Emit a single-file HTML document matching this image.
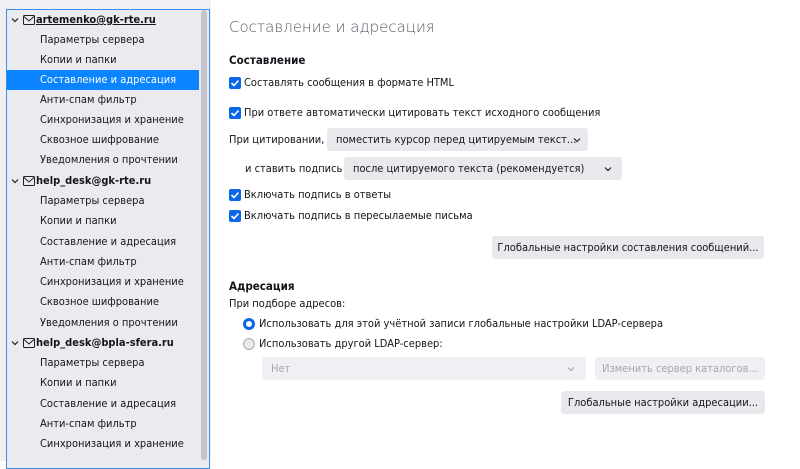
<!DOCTYPE html>
<html><head><meta charset="utf-8"><style>
*{margin:0;padding:0;box-sizing:border-box}
body{width:800px;height:461px;overflow:hidden;background:#fff;font-family:"DejaVu Sans","Liberation Sans",sans-serif;font-stretch:condensed;font-size:11px;color:#15141a;position:relative;white-space:nowrap}
.side{position:absolute;left:0;top:0;width:211px;height:461px;background:#f0f0f4}
.panel{position:absolute;left:6px;top:9px;width:204px;height:460px;border:1px solid #3a8ef0;background:#ebebef}
.sb{position:absolute;left:201px;top:10px;width:6px;height:450px;background:#c5c5c9;border-radius:3px}
.row{position:absolute;left:7px;width:192px;height:20px;line-height:20px}
.it{padding-left:33px}
.sel{background:#0a84ff;color:#fff}
.acc{font-weight:bold;padding-left:29px}
.acc .ch{position:absolute;left:4px;top:7px}
.acc .env{position:absolute;left:16px;top:5px}
.t{position:absolute}
.cb{position:absolute;width:12px;height:12px;background:#0a68e8;border-radius:2px}
.cb svg{position:absolute;left:1px;top:1px}
.sel2{position:absolute;height:23px;background:#e9e9ed;border-radius:3px;line-height:23px;padding-left:9px}
.btn{position:absolute;height:23px;background:#e9e9ed;border-radius:3px;line-height:23px;text-align:center}
.arr{position:absolute;top:9px}
</style></head><body>
<div class="side"><div class="panel"></div>
<div class="row acc" style="top:10px"><svg class="ch" width="8" height="6" viewBox="0 0 8 6"><path d="M1 1.5l3 3 3-3" fill="none" stroke="#222" stroke-width="1.2"/></svg><svg class="env" width="12" height="10" viewBox="0 0 12 10"><rect x=".5" y=".5" width="11" height="9" rx="1" fill="none" stroke="#222"/><path d="M1 1.5L6 6l5-4.5" fill="none" stroke="#222"/></svg><span style="text-decoration:underline">artemenko@gk-rte.ru</span></div>
<div class="row it" style="top:30px">Параметры сервера</div>
<div class="row it" style="top:50px">Копии и папки</div>
<div class="row it sel" style="top:70px">Составление и адресация</div>
<div class="row it" style="top:90px">Анти-спам фильтр</div>
<div class="row it" style="top:110px">Синхронизация и хранение</div>
<div class="row it" style="top:130px">Сквозное шифрование</div>
<div class="row it" style="top:150px">Уведомления о прочтении</div>
<div class="row acc" style="top:171px"><svg class="ch" width="8" height="6" viewBox="0 0 8 6"><path d="M1 1.5l3 3 3-3" fill="none" stroke="#222" stroke-width="1.2"/></svg><svg class="env" width="12" height="10" viewBox="0 0 12 10"><rect x=".5" y=".5" width="11" height="9" rx="1" fill="none" stroke="#222"/><path d="M1 1.5L6 6l5-4.5" fill="none" stroke="#222"/></svg>help_desk@gk-rte.ru</div>
<div class="row it" style="top:191px">Параметры сервера</div>
<div class="row it" style="top:211px">Копии и папки</div>
<div class="row it" style="top:232px">Составление и адресация</div>
<div class="row it" style="top:252px">Анти-спам фильтр</div>
<div class="row it" style="top:272px">Синхронизация и хранение</div>
<div class="row it" style="top:292px">Сквозное шифрование</div>
<div class="row it" style="top:313px">Уведомления о прочтении</div>
<div class="row acc" style="top:333px"><svg class="ch" width="8" height="6" viewBox="0 0 8 6"><path d="M1 1.5l3 3 3-3" fill="none" stroke="#222" stroke-width="1.2"/></svg><svg class="env" width="12" height="10" viewBox="0 0 12 10"><rect x=".5" y=".5" width="11" height="9" rx="1" fill="none" stroke="#222"/><path d="M1 1.5L6 6l5-4.5" fill="none" stroke="#222"/></svg>help_desk@bpla-sfera.ru</div>
<div class="row it" style="top:353px">Параметры сервера</div>
<div class="row it" style="top:373px">Копии и папки</div>
<div class="row it" style="top:394px">Составление и адресация</div>
<div class="row it" style="top:414px">Анти-спам фильтр</div>
<div class="row it" style="top:434px">Синхронизация и хранение</div>
<div class="sb"></div>
</div>

<div class="t" style="left:229px;top:18px;font-size:15px;color:#5b5b66;font-weight:300">Составление и адресация</div>
<div class="t" style="left:229px;top:53px;font-weight:bold;font-size:11.5px">Составление</div>

<div class="cb" style="left:229px;top:77px"><svg width="10" height="10" viewBox="0 0 10 10"><path d="M1.5 5l2.5 2.5 4.5-5" fill="none" stroke="#fff" stroke-width="1.6"/></svg></div>
<div class="t" style="left:244px;top:76px">Составлять сообщения в формате HTML</div>
<div class="cb" style="left:229px;top:107px"><svg width="10" height="10" viewBox="0 0 10 10"><path d="M1.5 5l2.5 2.5 4.5-5" fill="none" stroke="#fff" stroke-width="1.6"/></svg></div>
<div class="t" style="left:244px;top:106px">При ответе автоматически цитировать текст исходного сообщения</div>

<div class="t" style="left:229px;top:133px">При цитировании,</div>
<div class="sel2" style="left:327px;top:128px;width:261px">поместить курсор перед цитируемым текст...<svg class="arr" style="left:246px" width="8" height="6" viewBox="0 0 8 6"><path d="M1 1.5l3 3 3-3" fill="none" stroke="#222" stroke-width="1.2"/></svg></div>
<div class="t" style="left:245px;top:162px">и ставить подпись</div>
<div class="sel2" style="left:344px;top:157px;width:278px">после цитируемого текста (рекомендуется)<svg class="arr" style="left:260px" width="8" height="6" viewBox="0 0 8 6"><path d="M1 1.5l3 3 3-3" fill="none" stroke="#222" stroke-width="1.2"/></svg></div>

<div class="cb" style="left:229px;top:189px"><svg width="10" height="10" viewBox="0 0 10 10"><path d="M1.5 5l2.5 2.5 4.5-5" fill="none" stroke="#fff" stroke-width="1.6"/></svg></div>
<div class="t" style="left:244px;top:188px">Включать подпись в ответы</div>
<div class="cb" style="left:229px;top:210px"><svg width="10" height="10" viewBox="0 0 10 10"><path d="M1.5 5l2.5 2.5 4.5-5" fill="none" stroke="#fff" stroke-width="1.6"/></svg></div>
<div class="t" style="left:244px;top:209px">Включать подпись в пересылаемые письма</div>

<div class="btn" style="left:492px;top:236px;width:272px">Глобальные настройки составления сообщений...</div>

<div class="t" style="left:229px;top:279px;font-weight:bold;font-size:11.5px">Адресация</div>
<div class="t" style="left:229px;top:297px">При подборе адресов:</div>
<div style="position:absolute;left:243px;top:318px;width:12px;height:12px;border-radius:50%;border:3px solid #0a68e8;background:#fff"></div>
<div class="t" style="left:259px;top:317px">Использовать для этой учётной записи глобальные настройки LDAP-сервера</div>
<div style="position:absolute;left:243px;top:338px;width:12px;height:12px;border-radius:50%;border:1px solid #aaa;background:#e9e9ed"></div>
<div class="t" style="left:259px;top:337px">Использовать другой LDAP-сервер:</div>
<div class="sel2" style="left:262px;top:357px;width:324px;background:#f0f0f4;color:#a6a6ab">Нет<svg class="arr" style="left:305px" width="8" height="6" viewBox="0 0 8 6"><path d="M1 1.5l3 3 3-3" fill="none" stroke="#aaa" stroke-width="1.2"/></svg></div>
<div class="btn" style="left:595px;top:357px;width:170px;background:#f0f0f4;color:#a6a6ab">Изменить сервер каталогов...</div>
<div class="btn" style="left:561px;top:391px;width:204px">Глобальные настройки адресации...</div>
</body></html>
